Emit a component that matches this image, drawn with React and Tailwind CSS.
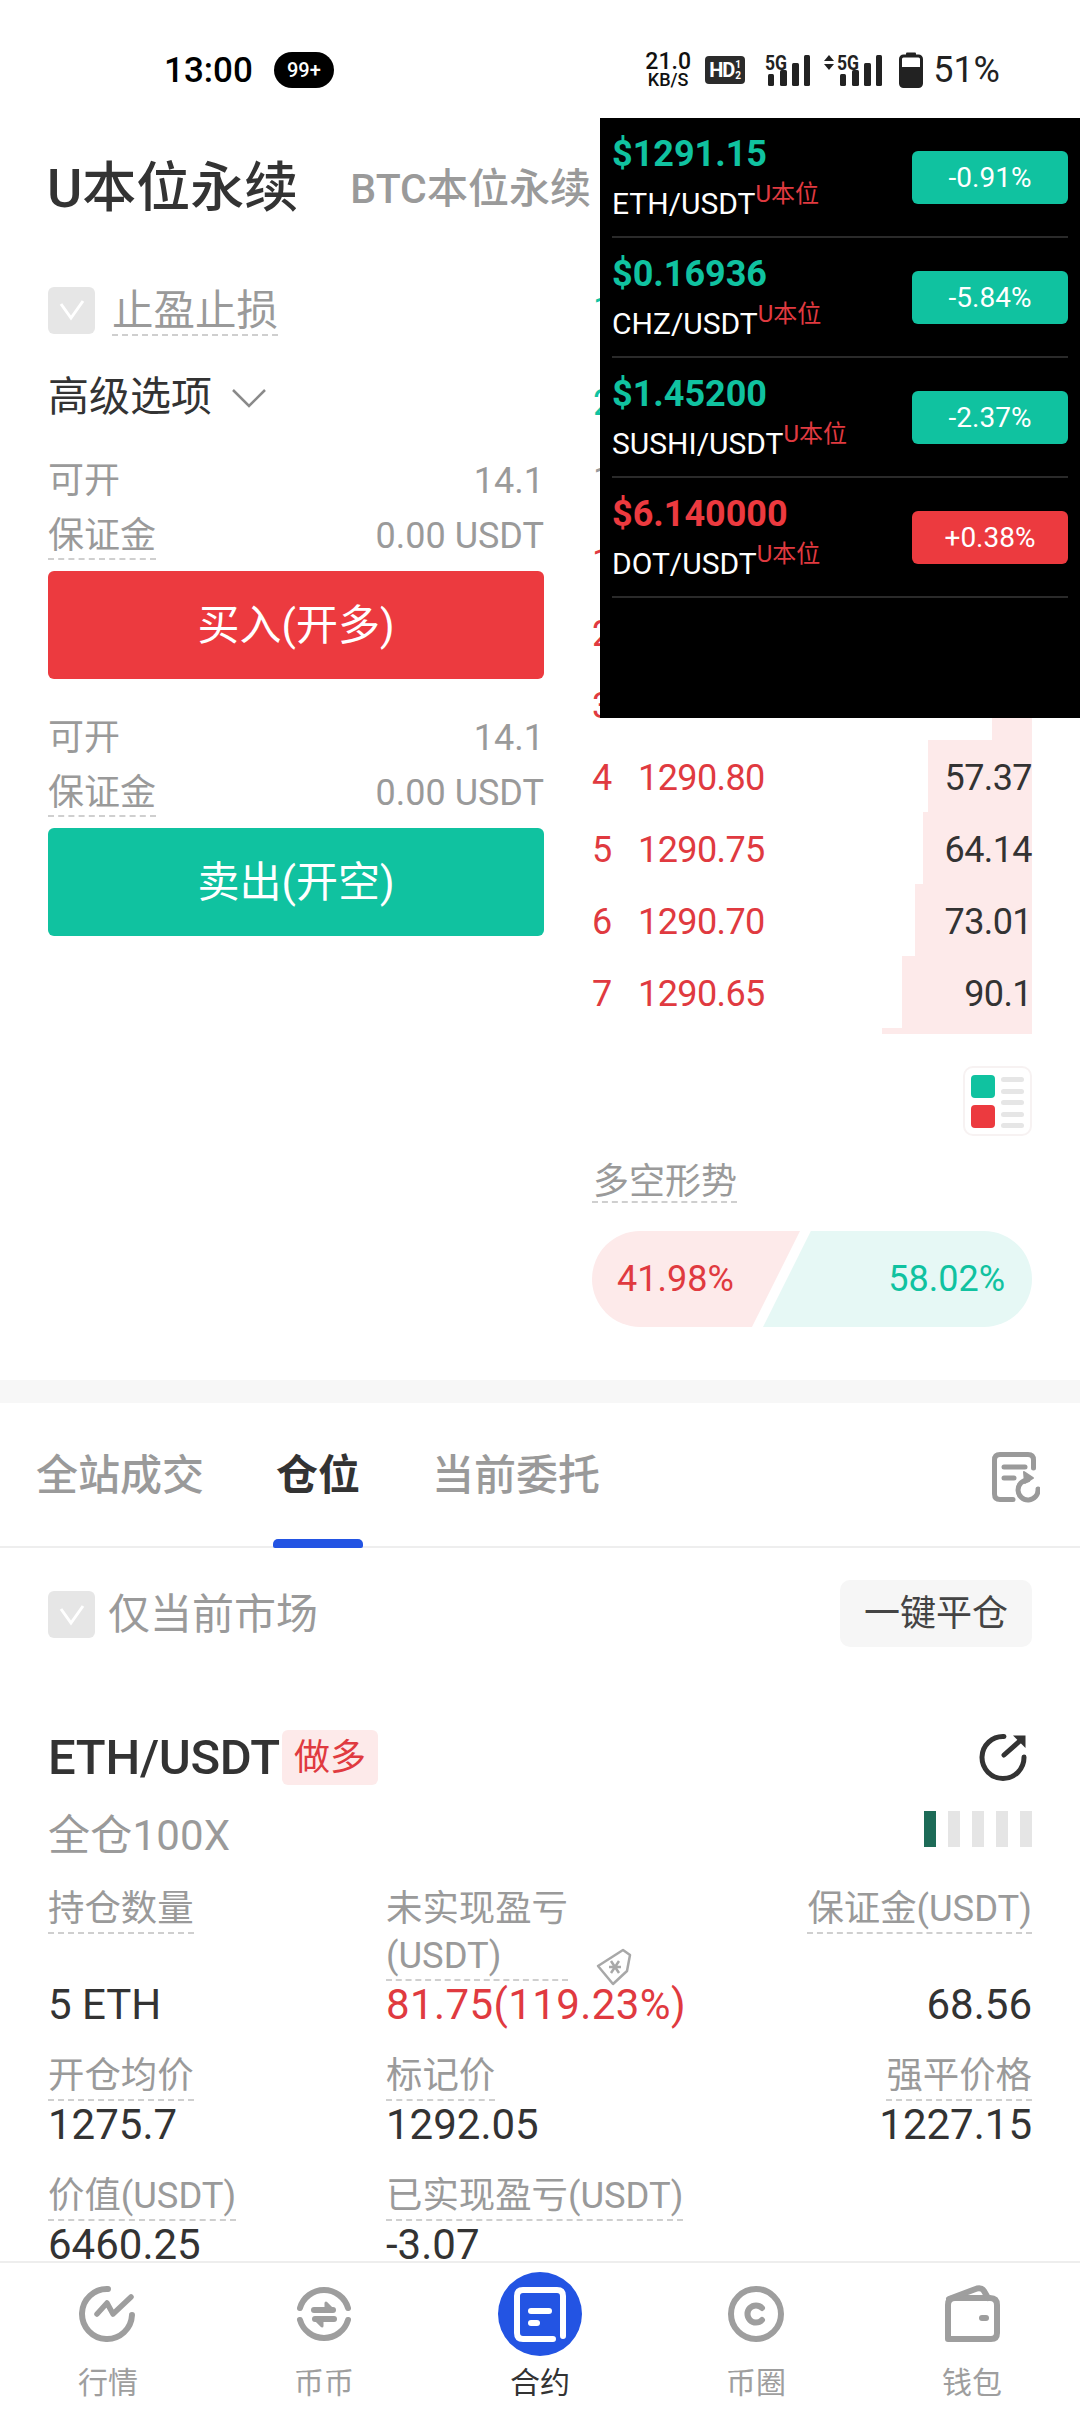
import React from "react";

const FONT = { fontFamily: 'Roboto, "Noto Sans CJK SC", sans-serif' };

const tickers = [
  { price: "$1291.15", pair: "ETH/USDT", pct: "-0.91%", up: false },
  { price: "$0.16936", pair: "CHZ/USDT", pct: "-5.84%", up: false },
  { price: "$1.45200", pair: "SUSHI/USDT", pct: "-2.37%", up: false },
  { price: "$6.140000", pair: "DOT/USDT", pct: "+0.38%", up: true },
];

const asks = [
  { n: 1, price: "", qty: "", w: 0 },
  { n: 2, price: "", qty: "", w: 0 },
  { n: 3, price: "", qty: "", w: 40 },
  { n: 4, price: "1290.80", qty: "57.37", w: 104 },
  { n: 5, price: "1290.75", qty: "64.14", w: 109 },
  { n: 6, price: "1290.70", qty: "73.01", w: 117 },
  { n: 7, price: "1290.65", qty: "90.1", w: 130 },
];

function Check() {
  return (
    <div className="w-[47px] h-[47px] rounded-[6px] bg-[#e6e6e6] flex items-center justify-center shrink-0">
      <svg width="28" height="24" viewBox="0 0 28 24" fill="none">
        <path d="M3 6 L13 20 L25 3" stroke="#fff" strokeWidth="3" />
      </svg>
    </div>
  );
}

function Dashed({ className = "", children }) {
  return <span className={"inline-block border-b-2 border-dashed border-[#cfcfcf] " + className}>{children}</span>;
}

function Signal({ arrows }) {
  return (
    <svg className="overflow-visible" width={arrows ? 60 : 47} height="34" viewBox={arrows ? "0 0 60 34" : "13 0 47 34"} fill="#222">
      {arrows && <path d="M1 8 L6 2 L11 8 Z M1 11 L11 11 L6 17 Z" />}
      <text x="14" y="17" fontSize="20" fontWeight="700" fontFamily="Roboto" textLength="22" lengthAdjust="spacingAndGlyphs">5G</text>
      <rect x="17" y="21" width="6" height="12" rx="1.5" />
      <rect x="29" y="17" width="7" height="16" rx="1.5" />
      <rect x="41" y="10" width="7" height="23" rx="1.5" />
      <rect x="53" y="2" width="6" height="31" rx="1.5" />
    </svg>
  );
}

function StatusBar() {
  return (
    <div className="h-[118px] shrink-0 flex justify-between pl-[164px] pr-[80px] pt-[50px]">
      <div className="flex items-center h-[40px]">
        <span className="text-[35px] font-medium text-black leading-none">13:00</span>
        <span className="ml-[21px] w-[60px] h-[36px] rounded-full bg-black text-white text-[20px] font-medium flex items-center justify-center">99+</span>
      </div>
      <div className="flex items-center h-[40px]">
        <div className="flex flex-col items-center w-[46px] text-[#111] font-medium">
          <span className="text-[23px] leading-[20px]">21.0</span>
          <span className="text-[18px] leading-[16px]">KB/S</span>
        </div>
        <div className="ml-[14px] w-[40px] h-[28px] rounded-[4px] bg-[#2b2b2b] text-white flex items-center justify-center">
          <span className="text-[20px] font-bold leading-none tracking-[-1px]">HD</span>
          <span className="flex flex-col text-[10px] font-bold leading-[11px] ml-[1px]">
            <span>1</span>
            <span>2</span>
          </span>
        </div>
        <div className="ml-[19px] flex">
          <Signal />
        </div>
        <div className="ml-[12px] flex">
          <Signal arrows />
        </div>
        <svg className="ml-[16px]" width="24" height="36" viewBox="0 0 24 36" fill="none">
          <rect x="7" y="0.5" width="10" height="4" rx="1" fill="#222" />
          <rect x="1.5" y="4" width="21" height="30.5" rx="3" stroke="#222" strokeWidth="3" />
          <rect x="1.5" y="15" width="21" height="20" rx="2" fill="#222" />
        </svg>
        <span className="ml-[10px] text-[36px] leading-none text-[#222]">51%</span>
      </div>
    </div>
  );
}

function TickerPanel() {
  return (
    <div className="absolute left-[600px] top-[118px] w-[480px] h-[600px] bg-black">
      {tickers.map((t) => (
        <div key={t.pair} className="mx-[12px] h-[120px] border-b-2 border-[#2a2a2a] flex justify-between items-start">
          <div className="flex flex-col">
            <span className={"mt-[16px] text-[36px] leading-[40px] font-bold " + (t.up ? "text-[#ec3a3f]" : "text-[#10c2a0]")}>{t.price}</span>
            <span className="mt-[13px] text-[30px] leading-[34px] text-white">
              {t.pair}
              <sup className="text-[24px] text-[#e03a40]">U本位</sup>
            </span>
          </div>
          <div className={"mt-[33px] w-[156px] h-[53px] rounded-[6px] text-white text-[28px] flex items-center justify-center " + (t.up ? "bg-[#ec3a3f]" : "bg-[#10c2a0]")}>
            {t.pct}
          </div>
        </div>
      ))}
    </div>
  );
}

function Balance({ color, label }) {
  return (
    <>
      <div className="mt-[38px] h-[40px] pt-[2px] flex justify-between items-center text-[36px] text-[#9a9a9a]">
        <span>可开</span>
        <span>14.1</span>
      </div>
      <div className="mt-[14px] h-[45px] flex justify-between items-start text-[36px] text-[#9a9a9a]">
        <Dashed className="leading-[44px]">保证金</Dashed>
        <span className="leading-[44px]">0.00 USDT</span>
      </div>
      <div className={"mt-[12px] h-[108px] rounded-[6px] text-white text-[42px] flex items-center justify-center " + color}>{label}</div>
    </>
  );
}

function LeftColumn() {
  return (
    <div className="w-[496px] ml-[48px] mr-[48px] shrink-0">
      <div className="h-[140px] pt-[2px] flex items-center">
        <span className="-ml-[1px] text-[54px] font-medium text-[#333] leading-none whitespace-nowrap shrink-0">U本位永续</span>
        <span className="ml-[52px] text-[41px] font-medium text-[#9a9a9a] leading-none whitespace-nowrap shrink-0">BTC本位永续</span>
      </div>
      <div className="mt-[28px] h-[48px] flex items-center">
        <Check />
        <Dashed className="ml-[17px] pt-[2px] text-[41.5px] leading-[47px] text-[#9a9a9a]">止盈止损</Dashed>
      </div>
      <div className="mt-[40px] h-[48px] flex items-center">
        <span className="text-[41px] text-[#333]">高级选项</span>
        <svg className="ml-[20px]" width="34" height="20" viewBox="0 0 34 20" fill="none">
          <path d="M1 2 L17 18 L33 2" stroke="#8a8a8a" strokeWidth="2.5" />
        </svg>
      </div>
      <Balance color="bg-[#ec3a3f]" label="买入(开多)" />
      <Balance color="bg-[#10c2a0]" label="卖出(开空)" />
    </div>
  );
}

function AskRow({ n, price, qty, w }) {
  return (
    <div className="relative h-[72px] pt-[3px] flex items-center text-[36px] tracking-[-0.6px]">
      {w > 0 && <div className="absolute right-0 top-0 bottom-0 bg-[#fdeaea]" style={{ width: w }} />}
      <span className="relative w-[46px] text-[#e03a40]">{n}</span>
      <span className="relative text-[#e03a40]">{price}</span>
      <span className="relative ml-auto text-[#333]">{qty}</span>
    </div>
  );
}

function RightColumn() {
  return (
    <div className="w-[440px] shrink-0">
      <div className="mt-[156px] h-[93px] leading-[72px] text-[36px] pl-[1px] text-[#10c2a0]">1</div>
      <div className="h-[77px] leading-[72px] text-[36px] pl-[1px] text-[#10c2a0]">2</div>
      <div className="h-[80px] leading-[72px] text-[36px] pl-[1px] text-[#9a9a9a]">1</div>
      {asks.map((a) => (
        <AskRow key={a.n} {...a} />
      ))}
      <div className="h-[6px] ml-auto w-[150px] bg-[#fdeaea]" />
      <div className="mt-[32px] ml-auto w-[69px] h-[70px] rounded-[10px] border-2 border-[#f7f2f2] flex gap-[6px] pl-[6px] pt-[7px]">
        <div className="flex flex-col gap-[7px]">
          <div className="w-[24px] h-[23px] rounded-[4px] bg-[#10c2a0]" />
          <div className="w-[24px] h-[23px] rounded-[4px] bg-[#ec3a3f]" />
        </div>
        <div className="flex flex-col gap-[6.5px] pt-[2px]">
          {[0, 1, 2, 3, 4].map((i) => (
            <div key={i} className="w-[23px] h-[5px] rounded-full bg-[#e6e6e6]" />
          ))}
        </div>
      </div>
      <div className="mt-[28px] h-[41px]">
        <Dashed className="text-[36px] leading-[37px] text-[#9a9a9a] pl-[1px]">多空形势</Dashed>
      </div>
      <div className="mt-[26px] h-[96px] flex text-[36px]">
        <div className="w-[208px] h-full shrink-0 bg-[#fdeaea] rounded-l-[48px] [clip-path:polygon(0_0,100%_0,76.9%_100%,0_100%)] flex items-center pl-[25px] text-[#e03a40]">
          41.98%
        </div>
        <div className="flex-1 -ml-[37px] h-full bg-[#e6f8f5] rounded-r-[48px] [clip-path:polygon(17.8%_0,100%_0,100%_100%,0_100%)] flex items-center justify-end pr-[27px] text-[#10c2a0]">
          58.02%
        </div>
      </div>
    </div>
  );
}

function Tabs() {
  return (
    <div className="relative h-[145px] shrink-0 border-b-2 border-[#eeeeee] flex pl-[36px] pt-[48px] text-[42px] leading-[50px]">
      <span className="font-medium text-[#9a9a9a]">全站成交</span>
      <span className="relative ml-[72px] font-bold text-[#333]">
        仓位
        <span className="absolute left-[-3px] bottom-[-2px] w-[90px] h-[9px] rounded-t-[5px] rounded-b-[2px] bg-[#2354e3]" />
      </span>
      <span className="ml-[72px] font-medium text-[#9a9a9a]">当前委托</span>
      <svg className="absolute left-[992px] top-[49px]" width="48" height="52" viewBox="0 0 48 52" fill="none" stroke="#9a9a9a" strokeWidth="5" strokeLinecap="round">
        <path d="M21 47.5 H8 Q2.5 47.5 2.5 42 V8 Q2.5 2.5 8 2.5 H36 Q41.5 2.5 41.5 8 V16" />
        <path d="M12 15 H33" />
        <path d="M12 26 H22" />
        <path d="M36 28 A10 10 0 1 0 46 37" />
        <path d="M32 20 L41 26 L33 31 Z" fill="#9a9a9a" strokeWidth="2" strokeLinejoin="round" />
      </svg>
    </div>
  );
}

function Field({ label, value, align = "left", valueClass = "text-[#333]", children }) {
  return (
    <div className={"relative flex flex-col justify-end " + (align === "right" ? "items-end" : "items-start")}>
      <div className="flex-1">
        <Dashed className="text-[36.4px] leading-[47px] text-[#9a9a9a]">{label}</Dashed>
      </div>
      <span className={"text-[42px] leading-[47px] " + valueClass}>{value}</span>
      {children}
    </div>
  );
}

function Position() {
  return (
    <div className="flex-1 min-h-0 overflow-hidden px-[48px]">
      <div className="pt-[32px] h-[99px] flex justify-between">
        <div className="h-[67px] pt-[2px] flex items-center">
          <Check />
          <span className="ml-[13px] text-[42px] text-[#9a9a9a]">仅当前市场</span>
        </div>
        <div className="w-[192px] h-[67px] rounded-[10px] bg-[#f6f6f6] text-[36px] text-[#444] flex items-center justify-center">一键平仓</div>
      </div>
      <div className="mt-[83px] h-[55px] flex items-center justify-between">
        <div className="flex items-center h-full">
          <span className="text-[49px] font-medium text-[#333] tracking-[-0.3px]">ETH/USDT</span>
          <span className="ml-[2px] w-[96px] h-[55px] rounded-[6px] bg-[#fdeaea] text-[#e03a40] text-[36px] flex items-center justify-center">做多</span>
        </div>
        <svg className="mr-[4px]" width="50" height="50" viewBox="0 0 50 50" fill="none" stroke="#333" strokeWidth="5" strokeLinecap="round">
          <path d="M26 3.5 A21 21 0 1 0 46 24" />
          <path d="M26 22 L44 6" />
          <path d="M35 2.5 H47.5 V15 Z" fill="#333" stroke="none" />
        </svg>
      </div>
      <div className="mt-[26px] h-[50px] flex justify-between">
        <span className="text-[42px] leading-[50px] tracking-[0.2px] text-[#9a9a9a]">全仓100X</span>
        <div className="flex gap-[12px] h-[36px]">
          <div className="w-[12px] bg-[#1d6b57]" />
          <div className="w-[12px] bg-[#e5e5e5]" />
          <div className="w-[12px] bg-[#e5e5e5]" />
          <div className="w-[12px] bg-[#e5e5e5]" />
          <div className="w-[12px] bg-[#e5e5e5]" />
        </div>
      </div>
      <div className="mt-[24px] grid grid-cols-[338px_1fr_auto] gap-y-[24px]">
        <Field label="持仓数量" value="5 ETH" />
        <Field label={<>未实现盈亏<br />(USDT)</>} value="81.75(119.23%)" valueClass="text-[#e03a40] tracking-[0.4px]">
          <svg className="absolute left-[209px] top-[62px]" width="38" height="40" viewBox="0 0 38 40" fill="none" stroke="#a8a8a8" strokeWidth="2.5" strokeLinejoin="round">
            <path d="M3 19 L28 3 L35 8 L32 24 L18 37 Z" />
            <path d="M14 20 H26 M16 14 L24 26 M24 14 L16 26" />
          </svg>
        </Field>
        <Field label="保证金(USDT)" value="68.56" align="right" />
        <Field label="开仓均价" value="1275.7" />
        <Field label="标记价" value="1292.05" />
        <Field label="强平价格" value="1227.15" align="right" />
        <Field label="价值(USDT)" value="6460.25" />
        <Field label="已实现盈亏(USDT)" value="-3.07" />
      </div>
    </div>
  );
}

function NavIcon({ name }) {
  const common = { fill: "none", stroke: "#9e9e9e", strokeWidth: 6, strokeLinecap: "round", strokeLinejoin: "round" };
  if (name === "market")
    return (
      <svg width="58" height="58" viewBox="0 0 58 58" {...common}>
        <path d="M29 4 A25 25 0 1 0 53 30" />
        <path d="M18 29 L28 18 L34 29 L52 12" strokeWidth="5.5" />
      </svg>
    );
  if (name === "swap")
    return (
      <svg width="58" height="58" viewBox="0 0 58 58" {...common}>
        <path d="M5 23 A25 25 0 0 1 53 23" />
        <path d="M5 35 A25 25 0 0 0 53 35" />
        <path d="M19 25 H38" />
        <path d="M20 34 H39" />
        <path d="M31 18 L38 25 L31 26 Z" fill="#9e9e9e" strokeWidth="3" />
        <path d="M27 41 L20 34 L27 33 Z" fill="#9e9e9e" strokeWidth="3" />
      </svg>
    );
  if (name === "circle")
    return (
      <svg width="58" height="58" viewBox="0 0 58 58" {...common}>
        <circle cx="29" cy="29" r="25" />
        <path d="M35 23 A8.5 8.5 0 1 0 35 35" />
      </svg>
    );
  return (
    <svg width="58" height="58" viewBox="0 0 58 58" {...common}>
      <path d="M5 20 Q5 13 12 13 H47 Q54 13 54 20 V48 Q54 54 48 54 H5 Z" />
      <path d="M6 14 L34 3.5 Q39 2.5 41 6 L45 13" />
      <path d="M39 33 H43" />
    </svg>
  );
}

function NavItem({ icon, label, active }) {
  return (
    <div className="relative flex-1 flex flex-col items-center">
      <div className="h-[100px] pt-[22px] flex justify-center">
        {active ? (
          <div className="-mt-[13px] w-[84px] h-[84px] rounded-full bg-[#2354e3] flex items-center justify-center">
            <svg width="84" height="84" viewBox="0 0 84 84" fill="none" stroke="#fff" strokeWidth="6" strokeLinecap="round">
              <path d="M65 64 V24 Q65 18 59 18 H25 Q19 18 19 24 V61 Q19 67 25 67 H55" />
              <path d="M33 39 H51" />
              <path d="M33 51 H39" />
            </svg>
          </div>
        ) : (
          <NavIcon name={icon} />
        )}
      </div>
      <span className={"text-[30px] leading-[40px] " + (active ? "text-[#333]" : "text-[#9e9e9e]")}>{label}</span>
    </div>
  );
}

function NavBar() {
  return (
    <div className="h-[151px] shrink-0 border-t-2 border-[#eeeeee] bg-white flex">
      <NavItem icon="market" label="行情" />
      <NavItem icon="swap" label="币币" />
      <NavItem active label="合约" />
      <NavItem icon="circle" label="币圈" />
      <NavItem icon="wallet" label="钱包" />
    </div>
  );
}

export default function App() {
  return (
    <div className="relative w-[1080px] h-[2412px] overflow-hidden bg-white flex flex-col" style={FONT}>
      <StatusBar />
      <div className="h-[1262px] shrink-0 flex overflow-hidden">
        <LeftColumn />
        <RightColumn />
      </div>
      <div className="h-[23px] shrink-0 bg-[#f7f7f7]" />
      <Tabs />
      <Position />
      <NavBar />
      <TickerPanel />
    </div>
  );
}
